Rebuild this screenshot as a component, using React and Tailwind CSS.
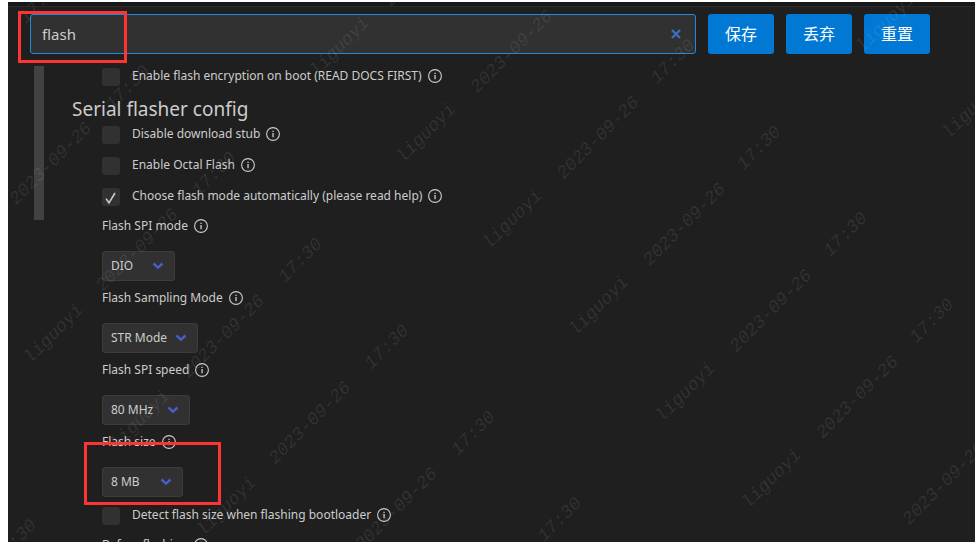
import React, { useState } from "react";

function InfoIcon() {
  return (
    <svg viewBox="0 0 14 14" className="size-3.5 shrink-0" aria-hidden="true">
      <circle cx="7" cy="7" r="6.4" fill="none" stroke="#cccccc" strokeWidth="1.1" />
      <path d="M6.4 3.8h1.3v1.3H6.4zM6.4 6h1.3v4.2H6.4z" fill="#cccccc" />
    </svg>
  );
}

function CheckRow({ id, label, defaultChecked = false }) {
  return (
    <div className="flex h-[31px] items-start">
      <span className="relative mt-2 size-[18px] shrink-0">
        <input
          id={id}
          type="checkbox"
          defaultChecked={defaultChecked}
          className="peer block size-[18px] appearance-none rounded-[3px] bg-[#313131]"
        />
        <svg
          viewBox="0 0 18 18"
          className="pointer-events-none absolute inset-0 hidden size-[18px] peer-checked:block"
          aria-hidden="true"
        >
          <path d="M4 10.6l3 4.2L13 5" fill="none" stroke="#cccccc" strokeWidth="1.6" />
        </svg>
      </span>
      <div className="ml-3 flex h-[31px] items-center gap-1.5">
        <label htmlFor={id}>{label}</label>
        <InfoIcon />
      </div>
    </div>
  );
}

function SelectRow({ id, label, value, width }) {
  return (
    <div className="h-[72px]">
      <div className="flex h-[30px] items-center gap-1.5">
        <label htmlFor={id}>{label}</label>
        <InfoIcon />
      </div>
      <div className={`relative mt-2.5 h-[30px] ${width}`}>
        <select
          id={id}
          className="block h-full w-full appearance-none rounded-[3px] border border-[#3c3c3c] bg-[#313131] pl-2 text-xs text-[#cccccc] outline-none"
        >
          <option>{value}</option>
        </select>
        <svg
          viewBox="0 0 12 8"
          className="pointer-events-none absolute top-[11px] right-[11px] h-2 w-3"
          aria-hidden="true"
        >
          <path d="M1.5 1.5L6 5.6l4.5-4.1" fill="none" stroke="#485fc7" strokeWidth="2.4" />
        </svg>
      </div>
    </div>
  );
}

const STEP = 86.4;
const series = (text, x, y, from, to) =>
  Array.from({ length: to - from + 1 }, (_, i) => [text, x + (from + i) * STEP, y + (from + i) * STEP]);

const marks = [
  ...series("liguoyi", 339, 46, 0, 5),
  ...series("liguoyi", 53, 333, 0, 2),
  ...series("liguoyi", 885, 22, 0, 1),
  ...series("2023-09-26", 511, 51, -1, 5),
  ...series("2023-09-26", 50, 163, 0, 4),
  ...series("17:30", 672, 61, 0, 3),
  ...series("17:30", 127, 87, -1, 5),
  ["17:30", 14, 541],
];

function Watermark() {
  return (
    <svg className="pointer-events-none absolute inset-0 h-full w-full" aria-hidden="true">
      <g
        fill="#ffffff"
        fillOpacity="0.09"
        fontFamily="'Liberation Mono', monospace"
        fontSize="18"
        fontStyle="italic"
        textAnchor="middle"
      >
        {marks.map(([text, x, y]) => (
          <text key={`${text}-${x}`} transform={`translate(${x} ${y}) rotate(-45)`} dy="6">
            {text}
          </text>
        ))}
      </g>
    </svg>
  );
}

function ActionButton({ children }) {
  return (
    <button type="button" className="h-10 w-[66px] rounded-[3px] bg-[#0078d4] text-base text-white">
      {children}
    </button>
  );
}

export default function App() {
  const [query, setQuery] = useState("flash");
  return (
    <div className="relative h-screen overflow-hidden bg-white pt-0.5 pl-2 font-['Noto_Sans','Noto_Sans_CJK_SC',sans-serif] text-xs text-[#cccccc]">
      <div className="flex h-full flex-col border-t-4 border-[#181818] bg-[#1f1f1f]">
        <header className="flex gap-3 border-t border-[#2b2b2b] pt-[7px] pr-[45px] pl-[22px]">
          <div className="relative flex-1">
            <input
              type="text"
              aria-label="Search parameter"
              value={query}
              onChange={(e) => setQuery(e.target.value)}
              className="block h-10 w-full rounded-[3px] border border-[#2488db] bg-[#313131] px-[11px] text-[15px] text-[#cccccc] outline-none"
            />
            <button
              type="button"
              aria-label="Clear"
              onClick={() => setQuery("")}
              className="absolute top-[15px] right-[15px] size-2.5"
            >
              <svg viewBox="0 0 10 10" className="size-2.5">
                <path d="M1 1l8 8M9 1L1 9" stroke="#3c6fb9" strokeWidth="2.4" />
              </svg>
            </button>
          </div>
          <ActionButton>保存</ActionButton>
          <ActionButton>丢弃</ActionButton>
          <ActionButton>重置</ActionButton>
        </header>
        <main className="flex min-h-0 flex-1 overflow-hidden pt-1.5 pl-[26px]">
          <div className="mt-1.5 h-[154px] w-2.5 shrink-0 bg-[#424242]" />
          <div className="ml-7 flex-1">
            <div className="pl-[30px]">
              <CheckRow id="encrypt" label="Enable flash encryption on boot (READ DOCS FIRST)" />
            </div>
            <h2 className="h-[27px] pt-1 text-[19px] leading-7">Serial flasher config</h2>
            <div className="pl-[30px]">
              <CheckRow id="stub" label="Disable download stub" />
              <CheckRow id="octal" label="Enable Octal Flash" />
              <CheckRow id="auto" label="Choose flash mode automatically (please read help)" defaultChecked />
              <SelectRow id="spi-mode" label="Flash SPI mode" value="DIO" width="w-[73px]" />
              <SelectRow id="sampling" label="Flash Sampling Mode" value="STR Mode" width="w-24" />
              <SelectRow id="speed" label="Flash SPI speed" value="80 MHz" width="w-[88px]" />
              <SelectRow id="size" label="Flash size" value="8 MB" width="w-[81px]" />
              <CheckRow id="detect" label="Detect flash size when flashing bootloader" />
              <SelectRow id="before" label="Before flashing" value="Reset to bootloader" width="w-40" />
            </div>
          </div>
        </main>
      </div>
      <Watermark />
      <div className="pointer-events-none absolute top-[11px] left-[18px] h-[52px] w-[109px] border-3 border-[#fd3434]" />
      <div className="pointer-events-none absolute top-[442px] left-[84px] h-[63px] w-[137px] border-3 border-[#fd3434]" />
    </div>
  );
}
